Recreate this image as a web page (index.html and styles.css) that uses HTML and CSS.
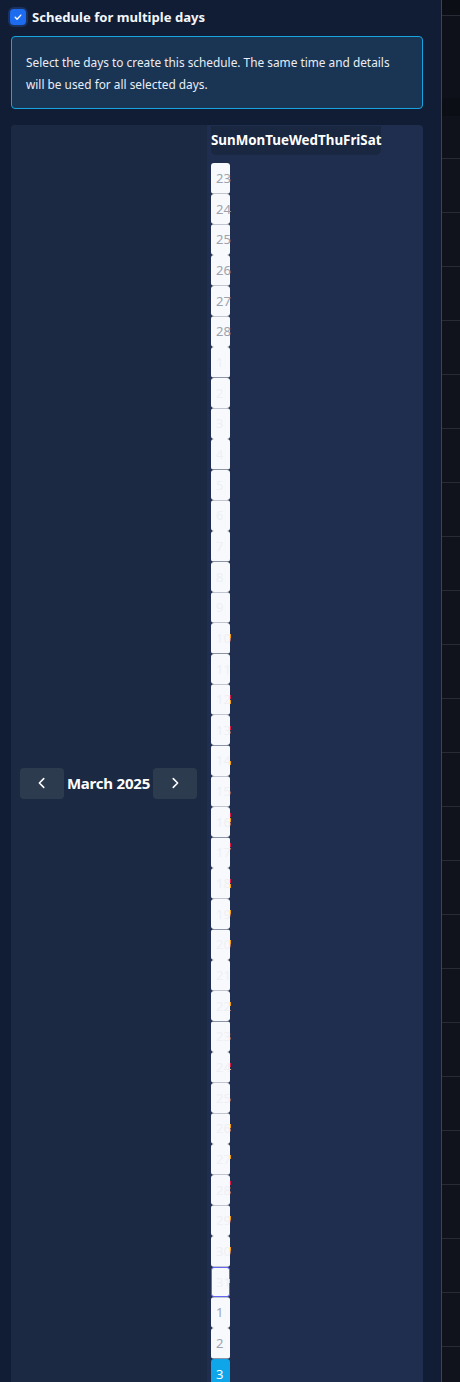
FILE: index.html
```html
<!DOCTYPE html>
<html>
<head>
<meta charset="utf-8">
<link rel="stylesheet" href="styles.css">
</head>
<body>
<div class="layout">
  <div class="panel">
    <label class="check-row">
      <span class="checkbox"><svg viewBox="0 0 16 16" width="10" height="10"><path d="M3.5 8.5l3 3 6-6.5" fill="none" stroke="#fff" stroke-width="2.2" stroke-linecap="round" stroke-linejoin="round"/></svg></span>
      <span class="check-label">Schedule for multiple days</span>
    </label>
    <div class="info">Select the days to create this schedule. The same time and details will be used for all selected days.</div>
    <div class="calendar">
      <div class="cal-nav">
        <button class="nav-btn"><svg viewBox="0 0 16 16" width="14" height="14"><path d="M10 3L5 8l5 5" fill="none" stroke="#fff" stroke-width="1.8" stroke-linecap="round" stroke-linejoin="round"/></svg></button>
        <span class="month">March 2025</span>
        <button class="nav-btn"><svg viewBox="0 0 16 16" width="14" height="14"><path d="M6 3l5 5-5 5" fill="none" stroke="#fff" stroke-width="1.8" stroke-linecap="round" stroke-linejoin="round"/></svg></button>
      </div>
      <div class="cal-body">
        <div class="weekdays">SunMonTueWedThuFriSat</div>
        <div class="days">
          <div class="day other">23</div>
          <div class="day other">24</div>
          <div class="day other">25</div>
          <div class="day other">26</div>
          <div class="day other">27</div>
          <div class="day other">28</div>
          <div class="day">1</div>
          <div class="day">2</div>
          <div class="day">3</div>
          <div class="day">4</div>
          <div class="day">5</div>
          <div class="day">6</div>
          <div class="day">7</div>
          <div class="day">8</div>
          <div class="day">9</div>
          <div class="day">10<i class="mark orange m1"></i></div>
          <div class="day">11</div>
          <div class="day">12<i class="mark red m1"></i><i class="mark orange m2"></i></div>
          <div class="day">13<i class="mark red m1"></i></div>
          <div class="day">14<i class="mark orange m2"></i></div>
          <div class="day">15</div>
          <div class="day">16<i class="mark red m0"></i><i class="mark orange m1"></i></div>
          <div class="day">17<i class="mark red m0"></i></div>
          <div class="day">18<i class="mark red m1"></i><i class="mark orange m2"></i></div>
          <div class="day">19<i class="mark orange m1"></i></div>
          <div class="day">20<i class="mark orange m1"></i></div>
          <div class="day">21</div>
          <div class="day">22<i class="mark orange m1"></i></div>
          <div class="day">23</div>
          <div class="day">24<i class="mark red m1"></i></div>
          <div class="day">25</div>
          <div class="day">26<i class="mark orange m1"></i></div>
          <div class="day">27<i class="mark orange m1"></i></div>
          <div class="day">28<i class="mark red m0"></i></div>
          <div class="day">29<i class="mark orange m1"></i></div>
          <div class="day">30<i class="mark orange m1"></i></div>
          <div class="day today">31<i class="mark beige m1"></i></div>
          <div class="day other">1</div>
          <div class="day other">2</div>
          <div class="day selected">3</div>
          <div class="day other">4</div>
          <div class="day other">5</div>
        </div>
      </div>
    </div>
  </div>
  <div class="backdrop">
    <div class="bd-row r1"></div>
    <div class="bd-row r2"></div>
    <div class="bd-row r3"></div>
    <div class="bd-row r4"></div>
    <div class="bd-row r5"></div>
    <div class="bd-row r5"></div>
    <div class="bd-row r5"></div>
    <div class="bd-row r5"></div>
    <div class="bd-row r5"></div>
    <div class="bd-row r5"></div>
    <div class="bd-row r5"></div>
    <div class="bd-row r5"></div>
    <div class="bd-row r5"></div>
    <div class="bd-row r5"></div>
    <div class="bd-row r5"></div>
    <div class="bd-row r5"></div>
    <div class="bd-row r5"></div>
    <div class="bd-row r5"></div>
    <div class="bd-row r5"></div>
    <div class="bd-row r5"></div>
    <div class="bd-row r5"></div>
    <div class="bd-row r5"></div>
    <div class="bd-row r5"></div>
    <div class="bd-row r5"></div>
    <div class="bd-row r5"></div>
    <div class="bd-row r5"></div>
  </div>
</div>
</body>
</html>
```
FILE: styles.css
```css
html, body {
  margin: 0;
  padding: 0;
  background: #101d35;
  height: 1382px;
  overflow: hidden;
}
.layout {
  display: flex;
  height: 1382px;
  font-family: "Noto Sans", "Open Sans", sans-serif;
}
.panel {
  width: 442px;
  flex: none;
  background: #101d35;
  border-right: 1px solid #3a4459;
  padding: 0 18px 0 11px;
  box-sizing: border-box;
  overflow: hidden;
}
.check-row {
  display: flex;
  align-items: center;
  gap: 6px;
  height: 34px;
  padding-left: 0;
}
.checkbox {
  width: 16px;
  height: 16px;
  border-radius: 4px;
  background: #1d6bef;
  box-shadow: 0 0 0 2px #1b3261;
  display: flex;
  align-items: center;
  justify-content: center;
  margin-left: -1px;
}
.check-label {
  color: #f3f6fb;
  font-weight: 700;
  font-size: 13.1px;
}
.info {
  margin-top: 2px;
  border: 1px solid #18a4e0;
  background: #1a3453;
  border-radius: 4px;
  color: #e8eef6;
  font-size: 11.85px;
  line-height: 22px;
  padding: 14px 14px 13px 14px;
}
.calendar {
  margin-top: 16px;
  background: #1f2e4f;
  border-radius: 4px;
  display: flex;
  height: 1316px;
}
.cal-nav {
  width: 196px;
  flex: none;
  background: #1b2943;
  border-radius: 4px 0 0 4px;
  display: flex;
  align-items: center;
  padding: 0 10px 0 9px;
  box-sizing: border-box;
}
.nav-btn {
  width: 44px;
  height: 31px;
  flex: none;
  border: 0;
  border-radius: 4px;
  background: #2d3b4f;
  display: flex;
  align-items: center;
  justify-content: center;
  padding: 0;
}
.month {
  color: #fff;
  font-weight: 700;
  font-size: 15px;
  flex: 1;
  text-align: center;
  white-space: nowrap;
  letter-spacing: -0.2px;
}
.cal-body {
  padding: 1px 0 0 4px;
  display: flex;
  flex-direction: column;
  align-items: flex-start;
}
.weekdays {
  background: #1a2740;
  border-radius: 0 0 5px 5px;
  color: #fff;
  font-weight: 700;
  font-size: 13.35px;
  height: 29px;
  line-height: 29px;
}
.days {
  margin-top: 8px;
  width: 19px;
  display: flex;
  flex-direction: column;
}
.day {
  position: relative;
  flex: none;
  height: 30.67px;
  background: #f8f9fc;
  border-radius: 3px;
  box-sizing: border-box;
  padding-left: 5px;
  font-size: 13px;
  line-height: 30.67px;
  color: #eef0f4;
  white-space: nowrap;
  clip-path: inset(0 -2px 0 0);
}
.day.other {
  color: #9ca3af;
}
.day.today {
  border: 1px solid #6366f1;
  line-height: 28.67px;
  padding-left: 4px;
}
.day.selected {
  background: #0ea5e9;
  color: #fff;
}
.mark {
  position: absolute;
  right: -1px;
  width: 1px;
  height: 4px;
}
.mark.m0 { top: 6px; }
.mark.m1 { top: 11px; }
.mark.m2 { top: 16px; }
.mark.orange { background: #f59e0b; }
.mark.red { background: #e11d48; }
.mark.beige { background: #f4c9a0; }
.backdrop {
  flex: 1;
  background: #10131b;
  display: flex;
  flex-direction: column;
}
.bd-row {
  flex: none;
  border-bottom: 1px solid #262b36;
  box-sizing: border-box;
}
.bd-row.r1 { height: 16px; background: #0b0e14; }
.bd-row.r2 { height: 82px; background: #0e1119; border-bottom: 0; }
.bd-row.r3 { height: 18px; background: #0b0e15; border-bottom: 0; }
.bd-row.r4 { height: 43px; background: #0f121a; }
.bd-row.r5 { height: 54px; background: #10131b; }
```
